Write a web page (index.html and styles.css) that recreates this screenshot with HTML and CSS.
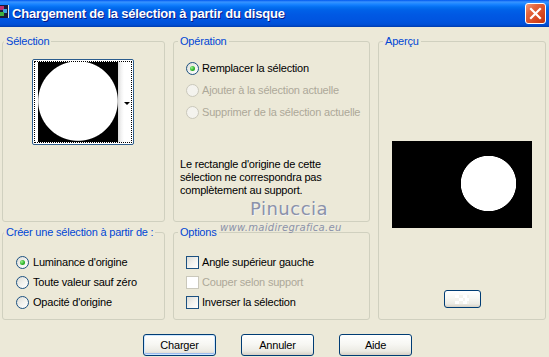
FILE: index.html
```html
<!DOCTYPE html>
<html lang="fr">
<head>
<meta charset="utf-8">
<title>Chargement de la sélection à partir du disque</title>
<link rel="stylesheet" href="styles.css">
</head>
<body>
<div class="window">
  <div class="titlebar">
    <svg class="app-icon" width="9" height="13" viewBox="0 0 9 13">
      <rect x="0" y="0" width="8" height="13" fill="#1b1b3a"/>
      <rect x="0" y="1" width="4" height="4" fill="#c03070"/>
      <rect x="3" y="4" width="4" height="4" fill="#3aa0e0"/>
      <rect x="0" y="7" width="4" height="4" fill="#40b040"/>
      <rect x="8" y="0" width="1" height="13" fill="#e0e0e0"/>
    </svg>
    <span class="title">Chargement de la sélection à partir du disque</span>
    <div class="close">
      <svg width="19" height="19" viewBox="0 0 19 19">
        <path d="M5 5 L14 14 M14 5 L5 14" stroke="#fff" stroke-width="2.2" stroke-linecap="square"/>
      </svg>
    </div>
  </div>

  <div class="content">
    <div class="groups">
      <fieldset class="grp grp-sel">
        <legend>Sélection</legend>
        <div class="sel-body">
          <div class="thumb">
            <div class="thumb-in">
              <div class="thumb-img"></div>
              <div class="thumb-strip"><span class="arrow"></span></div>
            </div>
          </div>
        </div>
      </fieldset>

      <fieldset class="grp grp-op">
        <legend>Opération</legend>
        <div class="op-body">
          <div class="opt"><span class="radio checked"></span><span>Remplacer la sélection</span></div>
          <div class="opt disabled"><span class="radio"></span><span>Ajouter à la sélection actuelle</span></div>
          <div class="opt disabled"><span class="radio"></span><span>Supprimer de la sélection actuelle</span></div>
        </div>
        <p class="note">Le rectangle d'origine de cette<br>sélection ne correspondra pas<br>complètement au support.</p>
      </fieldset>

      <fieldset class="grp grp-prev">
        <legend>Aperçu</legend>
        <div class="prev-body">
          <div class="preview"></div>
          <div class="btn btn-small">
            <svg width="14" height="9" viewBox="0 0 14 9">
              <rect x="0" y="0" width="14" height="9" fill="#f4f3ee"/>
              <rect x="0" y="0" width="4" height="3" fill="#fff"/>
              <rect x="8" y="0" width="4" height="3" fill="#fff"/>
              <rect x="4" y="3" width="4" height="3" fill="#fff"/>
              <rect x="10" y="3" width="4" height="3" fill="#fff"/>
              <rect x="0" y="6" width="4" height="3" fill="#fff"/>
              <rect x="8" y="6" width="4" height="3" fill="#fff"/>
            </svg>
          </div>
        </div>
      </fieldset>

      <fieldset class="grp grp-create">
        <legend>Créer une sélection à partir de :</legend>
        <div class="create-body">
          <div class="opt wide"><span class="radio checked"></span><span>Luminance d'origine</span></div>
          <div class="opt wide"><span class="radio"></span><span>Toute valeur sauf zéro</span></div>
          <div class="opt wide"><span class="radio"></span><span>Opacité d'origine</span></div>
        </div>
      </fieldset>

      <fieldset class="grp grp-opt">
        <legend>Options</legend>
        <div class="opts-body">
          <div class="opt short"><span class="check"></span><span>Angle supérieur gauche</span></div>
          <div class="opt short disabled"><span class="check"></span><span>Couper selon support</span></div>
          <div class="opt short"><span class="check"></span><span>Inverser la sélection</span></div>
        </div>
      </fieldset>
    </div>

    <div class="actions">
      <div class="btn btn-default">Charger</div>
      <div class="btn">Annuler</div>
      <div class="btn">Aide</div>
    </div>
  </div>

  <div class="wm-name">Pinuccia</div>
  <div class="wm-url">www.maidiregrafica.eu</div>
</div>
</body>
</html>
```

FILE: styles.css
```css
* { box-sizing: border-box; }

html, body {
  margin: 0;
  padding: 0;
}

body {
  width: 549px;
  height: 357px;
  overflow: hidden;
  background: #ECE9D8;
  font-family: "Liberation Sans", Arial, sans-serif;
  font-size: 11px;
  letter-spacing: -0.2px;
  color: #000;
}

.window {
  position: relative;
  width: 549px;
  height: 357px;
}

/* Title bar */
.titlebar {
  height: 27px;
  display: flex;
  align-items: center;
  color: #fff;
  background: linear-gradient(to bottom,
    #0058ee 0px, #3a93ff 2px, #288eff 3px, #127dff 5px, #0470f0 7px,
    #0061e8 10px, #0058e3 15px, #0055e0 20px, #0052db 23px,
    #004ed3 25px, #0043bf 26px, #003dad 27px);
}

.app-icon {
  flex: none;
  align-self: flex-start;
  margin-top: 5px;
}

.title {
  flex: 1;
  padding-left: 3px;
  font-size: 13px;
  font-weight: bold;
  letter-spacing: -0.2px;
  text-shadow: 1px 1px 0 #0a1883;
}

.close {
  width: 21px;
  height: 21px;
  margin-right: 3px;
  border: 1px solid #fff;
  border-radius: 3px;
  background: linear-gradient(135deg, #f19b7e 0%, #e5663e 30%, #d6461f 70%, #bf3510 100%);
  display: flex;
  align-items: center;
  justify-content: center;
}

/* Content */
.content {
  padding: 8px 2px 0 2px;
}

.groups {
  display: grid;
  grid-template-columns: 163px 197px 168px;
  grid-template-rows: 187px 94px;
  column-gap: 8px;
  row-gap: 4px;
}

.grp {
  margin: 0;
  padding: 0;
  min-width: 0;
  border: 1px solid #D0D0BF;
  border-radius: 3px;
}

.grp legend {
  margin-left: 4px;
  padding: 0 2px;
  line-height: 13px;
  color: #0046D5;
}

.grp-sel legend,
.grp-create legend {
  margin-left: 1px;
}

.grp-prev {
  grid-column: 3;
  grid-row: 1 / span 2;
}

.grp-create { grid-column: 1; grid-row: 2; }
.grp-opt { grid-column: 2; grid-row: 2; }

/* Selection thumbnail */
.sel-body {
  display: flex;
  justify-content: center;
  padding-top: 11px;
  padding-right: 1px;
}

.thumb {
  width: 102px;
  height: 86px;
  border: 1px solid #2B5C8C;
  border-radius: 2px;
  padding: 1px;
  background: #fff;
}

.thumb-in {
  height: 100%;
  border: 1px dotted #000;
  padding-left: 3px;
  display: flex;
  background: #fff;
}

.thumb-img {
  width: 80px;
  height: 80px;
  flex: none;
  background: radial-gradient(circle at 40px 39px, #fff 39.3px, #000 40.3px);
}

.thumb-strip {
  flex: 1;
  display: flex;
  align-items: center;
  justify-content: flex-end;
  padding-right: 1px;
  background: linear-gradient(to right, #d8d8d8 0px, #f2f2f2 3px, #fff 6px);
}

.arrow {
  width: 0;
  height: 0;
  border-left: 3px solid transparent;
  border-right: 3px solid transparent;
  border-top: 3px solid #000;
  margin-top: 2px;
}

/* Option rows */
.op-body {
  padding: 9px 0 0 12px;
}

.opt {
  display: flex;
  align-items: center;
  gap: 3px;
  height: 22px;
  white-space: nowrap;
}

.opt.wide {
  height: 20px;
  gap: 4px;
}

.opt.short {
  height: 20px;
}

.opt.disabled {
  color: #ACA899;
}

.radio {
  position: relative;
  flex: none;
  width: 13px;
  height: 13px;
  border: 1px solid #1C5180;
  border-radius: 50%;
  background: linear-gradient(135deg, #dcdcd7 0%, #f3f3ef 55%, #fff 100%);
}

.radio.checked::after {
  content: "";
  position: absolute;
  left: 3px;
  top: 3px;
  width: 5px;
  height: 5px;
  border-radius: 50%;
  background: radial-gradient(circle at 35% 35%, #9ef08f 0%, #2cb52a 55%, #1a8a1a 100%);
}

.disabled .radio {
  border-color: #CAC8BB;
  background: #f4f3ee;
}

.check {
  flex: none;
  width: 13px;
  height: 13px;
  border: 1px solid #1C5180;
  background: linear-gradient(135deg, #dcdcd7 0%, #f3f3ef 55%, #fff 100%);
}

.disabled .check {
  border-color: #CAC8BB;
  background: #fff;
}

.note {
  margin: 35px 0 0 6px;
  line-height: 13px;
}

.create-body {
  padding: 13px 0 0 13px;
}

.opts-body {
  padding: 13px 0 0 12px;
}

/* Preview */
.prev-body {
  display: flex;
  flex-direction: column;
  align-items: center;
  padding-top: 93px;
}

.preview {
  width: 140px;
  height: 87px;
  background: radial-gradient(circle at 96.5px 42.5px, #fff 27.3px, #000 28px);
}

/* Buttons */
.btn {
  width: 73px;
  height: 22px;
  display: flex;
  align-items: center;
  justify-content: center;
  border: 1px solid #003C74;
  border-radius: 3px;
  background: linear-gradient(to bottom, #ffffff 0%, #f7f7f3 45%, #ecebe4 80%, #d6d0c5 100%);
}

.btn-small {
  width: 37px;
  height: 18px;
  margin-top: 62px;
}

.btn-default {
  box-shadow: inset 0 0 0 1px #cee7ff, inset 0 -1px 0 1px #9dbcee;
}

.actions {
  display: flex;
  gap: 25px;
  padding-left: 141px;
  margin-top: 14px;
}

/* Watermark overlay */
.wm-name {
  position: absolute;
  left: 250px;
  top: 198px;
  font-family: "DejaVu Sans", sans-serif;
  font-size: 18px;
  letter-spacing: 0.5px;
  color: #8b92aa;
  text-shadow: 1px 1px 0 #f4f4f4;
}

.wm-url {
  position: absolute;
  left: 220px;
  top: 222px;
  font-family: "DejaVu Sans", sans-serif;
  font-style: italic;
  font-size: 10px;
  letter-spacing: 0.3px;
  color: #8b92aa;
}
```
